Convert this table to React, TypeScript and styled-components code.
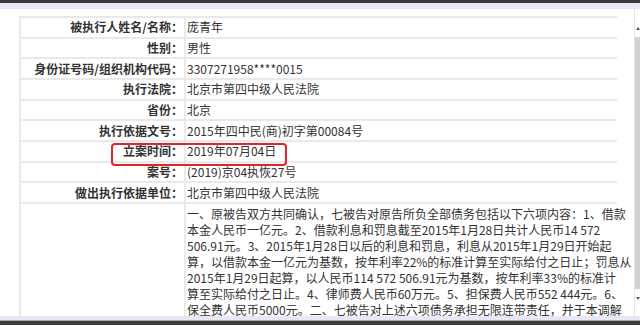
import React from "react";
import styled, { createGlobalStyle } from "styled-components";

const GlobalStyle = createGlobalStyle`
  html, body {
    margin: 0;
    padding: 0;
    background: #fff;
  }
  body {
    font-family: "Noto Sans CJK SC", "Noto Sans", sans-serif;
  }
`;

const Frame = styled.div`
  width: 640px;
  height: 325px;
  display: flex;
  flex-direction: column;
  overflow: hidden;
  background: #fff;
`;

const DarkBar = styled.div<{ $h: number }>`
  height: ${(p) => p.$h}px;
  background: #3b3b3b;
  flex-shrink: 0;
`;

const Band = styled.div<{ $h: number }>`
  height: ${(p) => p.$h}px;
  background: #e7e7f6;
  flex-shrink: 0;
`;

const Seam = styled.div`
  height: 1px;
  background: #a9a9b4;
  flex-shrink: 0;
`;

const Viewport = styled.div`
  height: 307px;
  display: flex;
  overflow: hidden;
  flex-shrink: 0;
`;

const Page = styled.div`
  flex: 1;
  padding: 7px 0 0 19px;
`;

const Scrollbar = styled.div`
  width: 5px;
  display: flex;
  flex-direction: column;
  align-items: flex-end;
  padding-top: 18px;
  border-left: 1px solid #e4e4e4;
`;

const ArrowUp = styled.div`
  width: 0;
  height: 0;
  border-left: 2px solid transparent;
  border-right: 2px solid transparent;
  border-bottom: 3px solid #555;
`;

const Thumb = styled.div`
  width: 5px;
  height: 252px;
  margin-top: 7px;
  background: #d2d2d2;
`;

const ArrowDown = styled.div`
  width: 0;
  height: 0;
  margin-top: 8px;
  border-left: 2px solid transparent;
  border-right: 2px solid transparent;
  border-top: 3px solid #555;
`;

const Table = styled.div`
  position: relative;
  width: 598px;
  box-sizing: border-box;
  display: grid;
  grid-template-columns: 163px 1fr;
  gap: 2px;
  padding: 2px;
  background: #e9e9e9;
`;

const Label = styled.div<{ $tall?: boolean }>`
  background: #fff;
  min-height: ${(p) => (p.$tall ? "240px" : "18.67px")};
  display: flex;
  align-items: center;
  justify-content: flex-end;
  padding-right: 1px;
  font-size: 12px;
  line-height: 16px;
  font-weight: 700;
  color: #333;
  white-space: nowrap;
`;

const Value = styled.div<{ $tall?: boolean }>`
  background: #fff;
  min-height: ${(p) => (p.$tall ? "238px" : "18.67px")};
  display: flex;
  align-items: ${(p) => (p.$tall ? "flex-start" : "center")};
  padding: ${(p) => (p.$tall ? "2px 0 0 1px" : "0 0 0 1px")};
  font-size: 12px;
  line-height: 16px;
  color: #333;
`;

const Para = styled.div`
  display: flex;
  flex-direction: column;
`;

const Line = styled.span`
  white-space: nowrap;
`;

// red annotation drawn over the 立案时间 row
const Highlight = styled.div`
  position: absolute;
  left: 92px;
  top: 126.5px;
  width: 176px;
  height: 23px;
  box-sizing: border-box;
  border: 2px solid #e4232b;
  border-radius: 4px;
  pointer-events: none;
`;

const rows: [string, string][] = [
  ["被执行人姓名/名称：", "庞青年"],
  ["性别：", "男性"],
  ["身份证号码/组织机构代码：", "3307271958****0015"],
  ["执行法院：", "北京市第四中级人民法院"],
  ["省份：", "北京"],
  ["执行依据文号：", "2015年四中民(商)初字第00084号"],
  ["立案时间：", "2019年07月04日"],
  ["案号：", "(2019)京04执恢27号"],
  ["做出执行依据单位：", "北京市第四中级人民法院"],
];

const duty = [
  "一、原被告双方共同确认，七被告对原告所负全部债务包括以下六项内容：1、借款",
  "本金人民币一亿元。2、借款利息和罚息截至2015年1月28日共计人民币14 572",
  "506.91元。3、2015年1月28日以后的利息和罚息，利息从2015年1月29日开始起",
  "算，以借款本金一亿元为基数，按年利率22%的标准计算至实际给付之日止；罚息从",
  "2015年1月29日起算，以人民币114 572 506.91元为基数，按年利率33%的标准计",
  "算至实际给付之日止。4、律师费人民币60万元。5、担保费人民币552 444元。6、",
  "保全费人民币5000元。二、七被告对上述六项债务承担无限连带责任，并于本调解",
];

const App = () => {
  return (
    <>
      <GlobalStyle />
      <Frame>
        <DarkBar $h={3} />
        <Band $h={6} />
        <Viewport>
          <Page>
            <Table>
              {rows.map(([k, v]) => (
                <React.Fragment key={k}>
                  <Label>{k}</Label>
                  <Value>{v}</Value>
                </React.Fragment>
              ))}
              <Label $tall>生效法律文书确定的义务：</Label>
              <Value $tall>
                <Para>
                  {duty.map((l) => (
                    <Line key={l}>{l}</Line>
                  ))}
                </Para>
              </Value>
              <Highlight />
            </Table>
          </Page>
          <Scrollbar>
            <ArrowUp />
            <Thumb />
            <ArrowDown />
          </Scrollbar>
        </Viewport>
        <Band $h={4} />
        <Seam />
        <DarkBar $h={4} />
      </Frame>
    </>
  );
};

export default App;
